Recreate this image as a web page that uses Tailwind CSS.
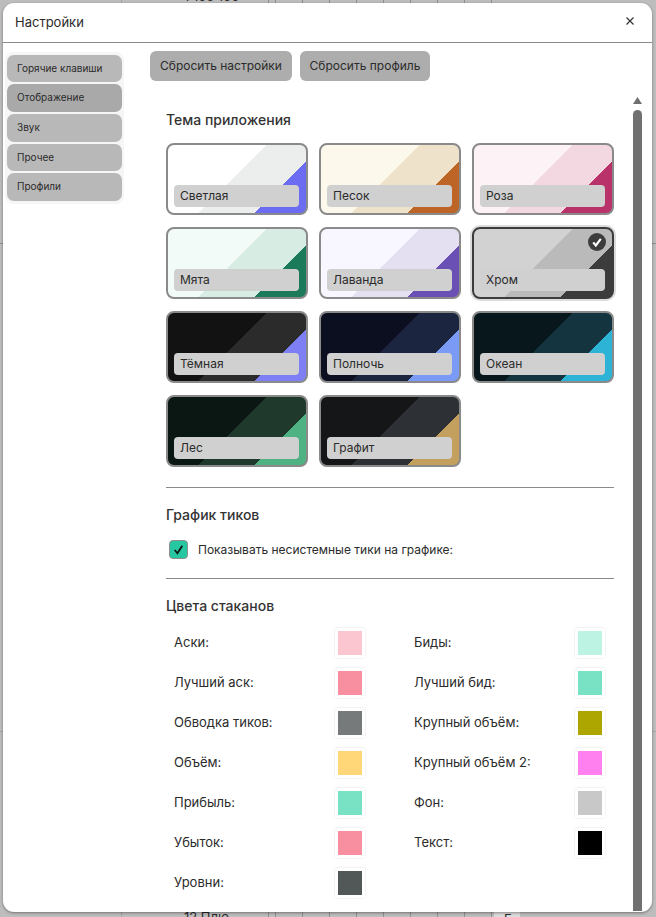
<!DOCTYPE html>
<html>
<head>
  <meta charset="utf-8">
  <script src="https://cdn.jsdelivr.net/npm/@tailwindcss/browser@4"></script>
</head>
<body class="relative h-[917px] w-[656px] overflow-hidden bg-[#bdbdbd] font-['Inter',sans-serif] text-[#2b2b2b]">
  <!-- table behind the overlay -->
  <div class="absolute left-0 top-[243px] h-px w-full bg-[#8f8f8f]"></div>
  <div class="absolute left-0 top-[731px] h-px w-full bg-[#a5a5a5]"></div>
  <div class="absolute inset-y-0 left-[121px] w-px bg-[#a5a5a5]"></div>
  <div class="absolute inset-y-0 left-[268px] w-px bg-[#8f8f8f]"></div>
  <div class="absolute inset-y-0 left-[275px] w-[218px] bg-[repeating-linear-gradient(90deg,#8f8f8f_0,#8f8f8f_1px,transparent_1px,transparent_27px)]"></div>
  <div class="absolute left-[494px] top-[912px] h-[5px] w-[26px] bg-[#dcdcdc] pl-[10px] text-[13px] leading-[14px]">Г</div>
  <div class="absolute left-[184px] top-[-11px] text-[13px] leading-[14px]">1 155 100</div>
  <div class="absolute left-[184px] top-[910px] text-[13px] leading-[14px]">12 Плю</div>

  <div class="absolute left-[3px] top-[3px] flex h-[909px] w-[649px] flex-col overflow-hidden rounded-[11px] bg-white shadow-[0_1px_3px_#0006]">
    <header class="flex h-[40px] shrink-0 items-center justify-between border-b border-[#8a8a8a] pl-[12px] pr-[17px]">
      <span class="text-[13px]">Настройки</span>
      <svg class="mb-[4px]" width="10" height="10" viewBox="0 0 10 10" fill="none" stroke="#333" stroke-width="1.2"><path d="M1.5 1.5l7 7M8.5 1.5l-7 7"/></svg>
    </header>

    <div class="flex min-h-0 flex-1">
      <nav class="mt-[9px] ml-[2px] flex h-[152px] w-[119px] shrink-0 flex-col gap-[2px] rounded-[8px] bg-[#f6f6f6] p-[2px] pt-[3px] text-[10px]">
        <a class="flex h-[27px] items-center rounded-[7px] bg-[#b8b8b8] pl-[10px]">Горячие клавиши</a>
        <a class="flex h-[28px] items-center rounded-[7px] bg-[#a9a9a9] pb-[1px] pl-[10px]">Отображение</a>
        <a class="flex h-[28px] items-center rounded-[7px] bg-[#b8b8b8] pb-[1px] pl-[10px]">Звук</a>
        <a class="flex h-[27px] items-center rounded-[7px] bg-[#b8b8b8] pl-[10px]">Прочее</a>
        <a class="flex h-[28px] items-center rounded-[7px] bg-[#b8b8b8] pb-[1px] pl-[10px]">Профили</a>
      </nav>

      <main class="flex min-w-0 flex-1 flex-col pl-[26px]">
        <div class="mt-[8px] flex gap-[8px] text-[12px]">
          <button class="h-[30px] w-[142px] rounded-[6px] bg-[#adadad]">Сбросить настройки</button>
          <button class="h-[30px] w-[130px] rounded-[6px] bg-[#adadad]">Сбросить профиль</button>
        </div>

        <div class="flex min-h-0 flex-1">
          <div class="w-[448px] shrink-0 pl-[16px] box-content">
            <h2 class="mt-[30px] text-[14px] leading-[18px] font-medium text-[#333]">Тема приложения</h2>

            <div class="mt-[14px] grid grid-cols-[142px_142px_142px] gap-x-[11px] gap-y-[12px] text-[12px]">
              <div class="relative h-[72px] rounded-[8px] border-2 border-[#8a8a8a] bg-[linear-gradient(135deg,#ffffff_48%,#eceeee_48%,#eceeee_75%,#6c6cf2_75%)]">
                <span class="absolute bottom-[6px] left-[6px] right-[7px] flex h-[22px] items-center rounded-[4px] bg-[#d0d0d0] pl-[6px]">Светлая</span>
              </div>
              <div class="relative h-[72px] rounded-[8px] border-2 border-[#8a8a8a] bg-[linear-gradient(135deg,#fdf8ec_48%,#eee2cb_48%,#eee2cb_75%,#bd6526_75%)]">
                <span class="absolute bottom-[6px] left-[6px] right-[7px] flex h-[22px] items-center rounded-[4px] bg-[#d0d0d0] pl-[6px]">Песок</span>
              </div>
              <div class="relative h-[72px] rounded-[8px] border-2 border-[#8a8a8a] bg-[linear-gradient(135deg,#fdf3f7_48%,#f3d8e2_48%,#f3d8e2_75%,#b9326a_75%)]">
                <span class="absolute bottom-[6px] left-[6px] right-[7px] flex h-[22px] items-center rounded-[4px] bg-[#d0d0d0] pl-[6px]">Роза</span>
              </div>
              <div class="relative h-[72px] rounded-[8px] border-2 border-[#8a8a8a] bg-[linear-gradient(135deg,#f2fbf7_48%,#d7ece2_48%,#d7ece2_75%,#1a7a5a_75%)]">
                <span class="absolute bottom-[6px] left-[6px] right-[7px] flex h-[22px] items-center rounded-[4px] bg-[#d0d0d0] pl-[6px]">Мята</span>
              </div>
              <div class="relative h-[72px] rounded-[8px] border-2 border-[#8a8a8a] bg-[linear-gradient(135deg,#f8f6fe_48%,#e5dff2_48%,#e5dff2_75%,#6a4fb5_75%)]">
                <span class="absolute bottom-[6px] left-[6px] right-[7px] flex h-[22px] items-center rounded-[4px] bg-[#d0d0d0] pl-[6px]">Лаванда</span>
              </div>
              <div class="relative h-[72px] rounded-[8px] border-2 border-[#3c3c3c] bg-[linear-gradient(135deg,#d2d2d2_48%,#bababa_48%,#bababa_75%,#3c3c3c_75%)] shadow-[0_0_0_2px_#dcdcdc]">
                <span class="absolute bottom-[6px] left-[6px] right-[7px] flex h-[22px] items-center rounded-[4px] bg-[#d0d0d0] pl-[6px]">Хром</span>
                <svg class="absolute right-[6px] top-[4px]" width="18" height="18" viewBox="0 0 18 18"><circle cx="9" cy="9" r="9" fill="#3c3c3c"/><path d="M5.2 9.4l2.6 3 5-6.6" fill="none" stroke="#fff" stroke-width="2.2"/></svg>
              </div>
              <div class="relative h-[72px] rounded-[8px] border-2 border-[#8a8a8a] bg-[linear-gradient(135deg,#121212_48%,#2b2b2b_48%,#2b2b2b_75%,#7f7ff5_75%)]">
                <span class="absolute bottom-[6px] left-[6px] right-[7px] flex h-[22px] items-center rounded-[4px] bg-[#d0d0d0] pl-[6px]">Тёмная</span>
              </div>
              <div class="relative h-[72px] rounded-[8px] border-2 border-[#8a8a8a] bg-[linear-gradient(135deg,#0b0f20_48%,#1b2540_48%,#1b2540_75%,#7a9af5_75%)]">
                <span class="absolute bottom-[6px] left-[6px] right-[7px] flex h-[22px] items-center rounded-[4px] bg-[#d0d0d0] pl-[6px]">Полночь</span>
              </div>
              <div class="relative h-[72px] rounded-[8px] border-2 border-[#8a8a8a] bg-[linear-gradient(135deg,#07171c_48%,#14343f_48%,#14343f_75%,#2cb3d6_75%)]">
                <span class="absolute bottom-[6px] left-[6px] right-[7px] flex h-[22px] items-center rounded-[4px] bg-[#d0d0d0] pl-[6px]">Океан</span>
              </div>
              <div class="relative h-[72px] rounded-[8px] border-2 border-[#8a8a8a] bg-[linear-gradient(135deg,#0b1712_48%,#1f3a2c_48%,#1f3a2c_75%,#4fb283_75%)]">
                <span class="absolute bottom-[6px] left-[6px] right-[7px] flex h-[22px] items-center rounded-[4px] bg-[#d0d0d0] pl-[6px]">Лес</span>
              </div>
              <div class="relative h-[72px] rounded-[8px] border-2 border-[#8a8a8a] bg-[linear-gradient(135deg,#141618_48%,#2d3136_48%,#2d3136_75%,#c4a05e_75%)]">
                <span class="absolute bottom-[6px] left-[6px] right-[7px] flex h-[22px] items-center rounded-[4px] bg-[#d0d0d0] pl-[6px]">Графит</span>
              </div>
            </div>

            <hr class="mt-[20px] border-[#8a8a8a]">
            <h2 class="mt-[18px] text-[14px] leading-[18px] font-medium text-[#333]">График тиков</h2>
            <label class="mt-[16px] flex items-center pl-[3px] text-[12px] leading-[18px]">
              <span class="flex size-[19px] items-center justify-center rounded-[4px] border border-[#8f8f8f] bg-[#26c7a1]">
                <svg width="13" height="13" viewBox="0 0 12 12" fill="none" stroke="#111" stroke-width="1.6"><path d="M2.5 6.5l2.5 3 4.5-7"/></svg>
              </span>
              <span class="ml-[10px]">Показывать несистемные тики на графике:</span>
            </label>
            <hr class="mt-[19px] border-[#8a8a8a]">
            <h2 class="mt-[18px] text-[14px] leading-[18px] font-medium text-[#333]">Цвета стаканов</h2>

            <div class="mt-[13px] grid grid-cols-[191px_191px] gap-x-[49px] gap-y-[10px] pl-[8px] text-[13px]">
              <div class="flex h-[30px] items-center justify-between"><span>Аски:</span><span class="border-[3px] border-white size-[30px] bg-[#fcc6d1] shadow-[0_0_2px_#ddd]"></span></div>
              <div class="flex h-[30px] items-center justify-between"><span>Биды:</span><span class="border-[3px] border-white size-[30px] bg-[#bdf3e2] shadow-[0_0_2px_#ddd]"></span></div>
              <div class="flex h-[30px] items-center justify-between"><span>Лучший аск:</span><span class="border-[3px] border-white size-[30px] bg-[#f78fa0] shadow-[0_0_2px_#ddd]"></span></div>
              <div class="flex h-[30px] items-center justify-between"><span>Лучший бид:</span><span class="border-[3px] border-white size-[30px] bg-[#79e2c4] shadow-[0_0_2px_#ddd]"></span></div>
              <div class="flex h-[30px] items-center justify-between"><span>Обводка тиков:</span><span class="border-[3px] border-white size-[30px] bg-[#767a7a] shadow-[0_0_2px_#ddd]"></span></div>
              <div class="flex h-[30px] items-center justify-between"><span>Крупный объём:</span><span class="border-[3px] border-white size-[30px] bg-[#aea600] shadow-[0_0_2px_#ddd]"></span></div>
              <div class="flex h-[30px] items-center justify-between"><span>Объём:</span><span class="border-[3px] border-white size-[30px] bg-[#ffd778] shadow-[0_0_2px_#ddd]"></span></div>
              <div class="flex h-[30px] items-center justify-between"><span>Крупный объём 2:</span><span class="border-[3px] border-white size-[30px] bg-[#ff80ee] shadow-[0_0_2px_#ddd]"></span></div>
              <div class="flex h-[30px] items-center justify-between"><span>Прибыль:</span><span class="border-[3px] border-white size-[30px] bg-[#79e2c4] shadow-[0_0_2px_#ddd]"></span></div>
              <div class="flex h-[30px] items-center justify-between"><span>Фон:</span><span class="border-[3px] border-white size-[30px] bg-[#c8c8c8] shadow-[0_0_2px_#ddd]"></span></div>
              <div class="flex h-[30px] items-center justify-between"><span>Убыток:</span><span class="border-[3px] border-white size-[30px] bg-[#f78fa0] shadow-[0_0_2px_#ddd]"></span></div>
              <div class="flex h-[30px] items-center justify-between"><span>Текст:</span><span class="border-[3px] border-white size-[30px] bg-black shadow-[0_0_2px_#ddd]"></span></div>
              <div class="flex h-[30px] items-center justify-between"><span>Уровни:</span><span class="border-[3px] border-white size-[30px] bg-[#525858] shadow-[0_0_2px_#ddd]"></span></div>
            </div>
          </div>

          <!-- scrollbar -->
          <div class="ml-[19px] flex w-[9px] shrink-0 flex-col items-center pt-[16px] pb-[1px]">
            <svg width="9" height="7" viewBox="0 0 9 7"><path d="M4.5 0L9 7H0z" fill="#707070"/></svg>
            <div class="mt-[6px] w-full flex-1 rounded-t-[5px] bg-[#707070]"></div>
          </div>
        </div>
      </main>
    </div>
  </div>
</body>
</html>
